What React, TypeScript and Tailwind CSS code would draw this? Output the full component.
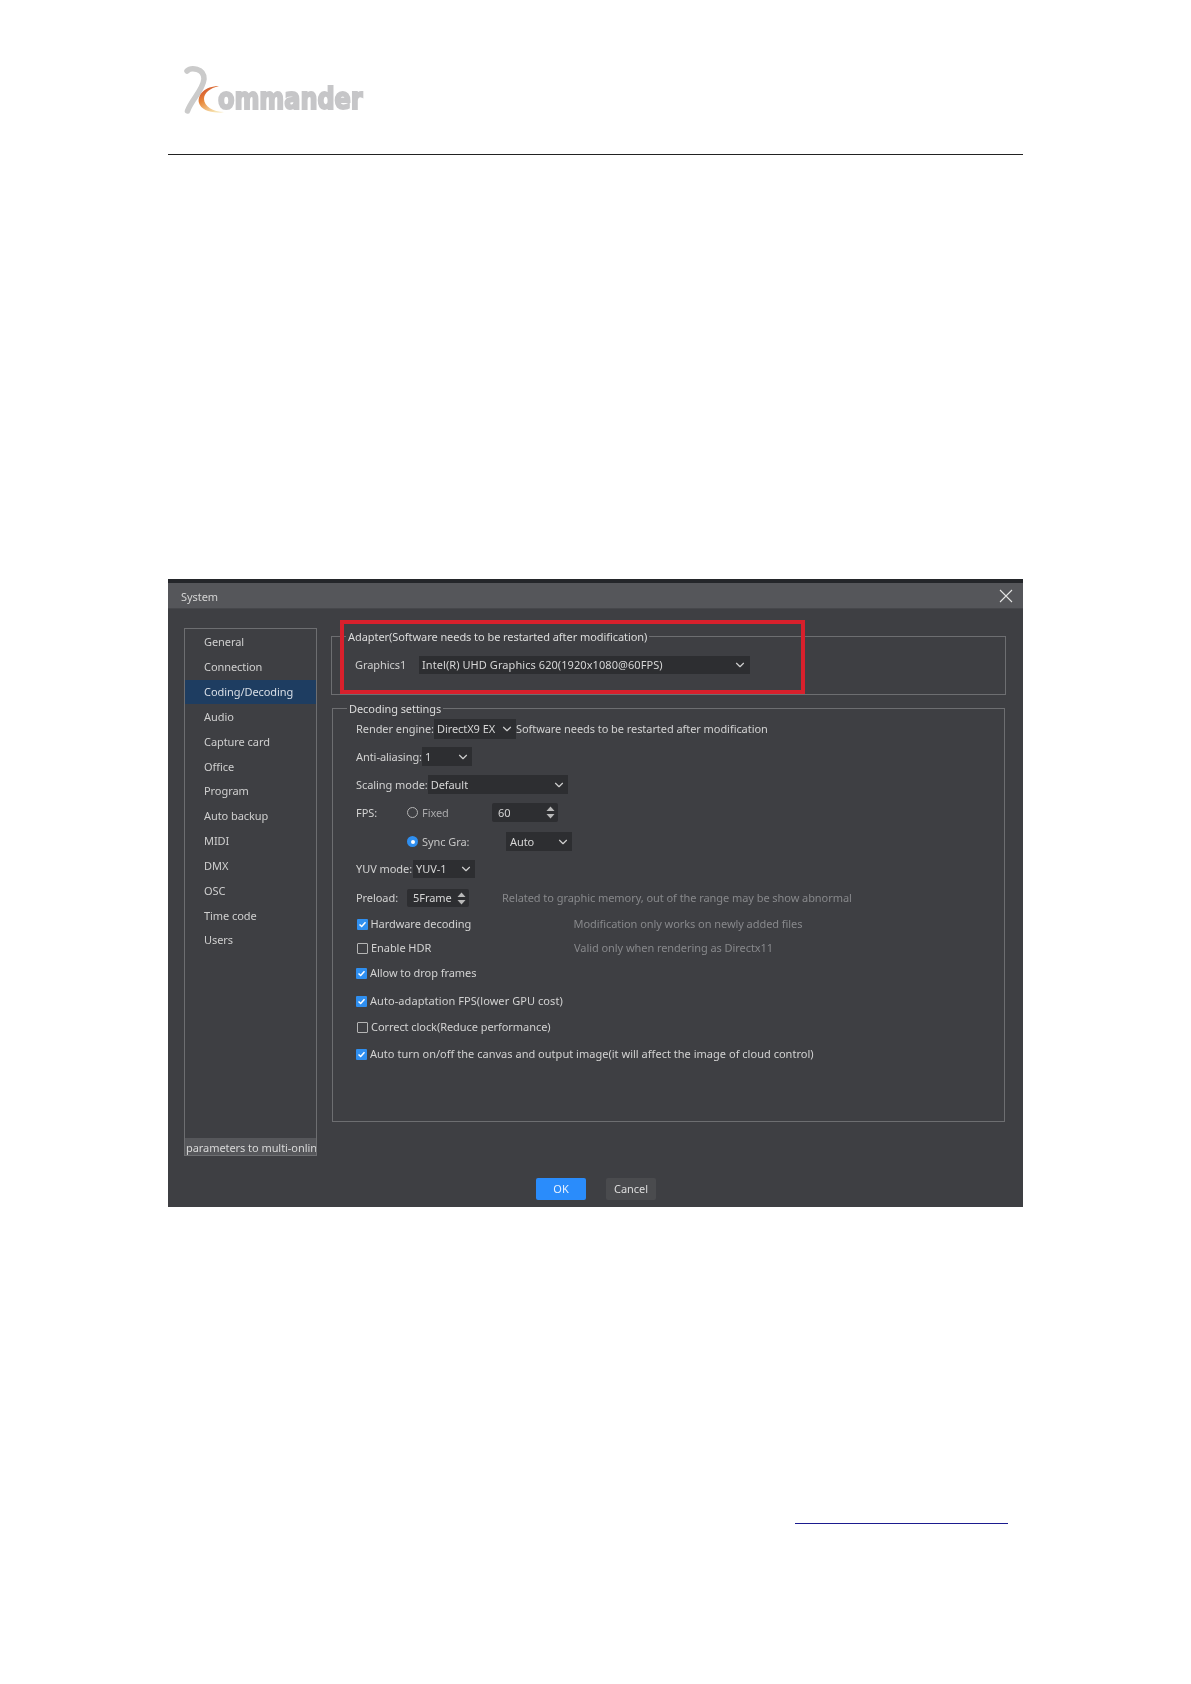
import { ChevronDown } from "lucide-react";
import type { ReactNode } from "react";

const navItems = [
  "General",
  "Connection",
  "Coding/Decoding",
  "Audio",
  "Capture card",
  "Office",
  "Program",
  "Auto backup",
  "MIDI",
  "DMX",
  "OSC",
  "Time code",
  "Users",
];

function Logo() {
  return (
    <svg width="190" height="54" viewBox="182 64 190 54" className="ml-[14px] blur-[0.4px]">
      <defs>
        <linearGradient id="crescent" x1="0" y1="0" x2="0.6" y2="1">
          <stop offset="0" stopColor="#c9402a" />
          <stop offset="0.5" stopColor="#e98a3c" />
          <stop offset="1" stopColor="#f7e3b0" />
        </linearGradient>
      </defs>
      <path d="M187 71 C191 67 204 68 204 79 C203 90 192 99 187.500 111" fill="none" stroke="#cbcbcb" strokeWidth="5.500" strokeLinecap="round" />
      <path d="M219 86 C205 86 197 95 199 103 C201 110 212 114 224 112 C213 112 204 106 204 99 C204 93 210 88 219 86 Z" fill="url(#crescent)" />
      <text transform="translate(218 109) scale(1 1.25)" fontFamily="'DejaVu Sans', sans-serif" fontWeight="700" fontSize="24" fill="#c6c6c8" stroke="#c6c6c8" strokeWidth="1.600">
        ommander
      </text>
    </svg>
  );
}

function Select({ value, className }: { value: string; className: string }) {
  return (
    <div className={`flex items-center justify-between bg-[#2d2e31] pl-[3px] pr-[2px] text-[#d6d6d6] ${className}`}>
      <span>{value}</span>
      <ChevronDown size={14} strokeWidth={2} className="text-[#cfcfcf]" />
    </div>
  );
}

function Spinner({ value, className }: { value: string; className: string }) {
  return (
    <div className={`flex items-center justify-between rounded-[2px] bg-[#2d2e31] pl-[6px] pr-[3px] text-[#d6d6d6] ${className}`}>
      <span>{value}</span>
      <svg width="9" height="13" viewBox="0 0 9 13" fill="#b9b9b9">
        <path d="M4.500 0.500 L8.500 5 H0.500 Z" />
        <path d="M0.500 8 H8.500 L4.500 12.500 Z" />
      </svg>
    </div>
  );
}

function Check({ checked }: { checked?: boolean }) {
  if (!checked) {
    return <span className="block h-[11px] w-[11px] shrink-0 rounded-[1px] border border-[#b5b5b5]" />;
  }
  return (
    <span className="flex h-[11px] w-[11px] shrink-0 items-center justify-center rounded-[1px] bg-[#2f8ff0]">
      <svg width="9" height="9" viewBox="0 0 9 9" fill="none" stroke="#ffffff" strokeWidth="1.500">
        <path d="M1.500 4.500 L3.700 6.500 L7.500 2.200" />
      </svg>
    </span>
  );
}

function CheckRow({ checked, label, hint, className }: { checked?: boolean; label: string; hint?: string; className: string }) {
  return (
    <div className={`flex h-[18px] items-center ${className}`}>
      <Check checked={checked} />
      <span className="ml-[3px] w-[203px] whitespace-nowrap">{label}</span>
      {hint ? <span className="whitespace-nowrap text-[#87888b]">{hint}</span> : null}
    </div>
  );
}

function Group({ title, className, children }: { title: string; className: string; children: ReactNode }) {
  return (
    <div className={`relative border border-[#6d6e71] ${className}`}>
      <span className="absolute left-[14px] top-[-8px] whitespace-nowrap bg-[#3e3f43] px-[2px] text-[#dcdcdc]">{title}</span>
      {children}
    </div>
  );
}

export default function App() {
  return (
    <div className="h-[1684px] overflow-hidden bg-white px-[168px] font-['Noto_Sans',sans-serif] text-[11px] leading-[16px] tracking-[-0.06px]">
      <header className="h-[155px] border-b border-[#222222] pt-[64px]">
        <Logo />
      </header>

      <section className="relative mt-[424px] h-[628px] bg-[#3e3f43] text-[#d2d2d2] blur-[0.3px]">
        <div className="h-[4px] bg-[#24262a]" />
        <div className="flex h-[26px] items-center justify-between border-b border-[#46474b] bg-[#55565a] pl-[13px] pr-[10px] pt-[2px] text-[#d4d4d4]">
          <span>System</span>
          <svg width="14" height="14" viewBox="0 0 14 14" stroke="#e4e4e4" strokeWidth="1.100" fill="none" className="mb-[2px]">
            <path d="M1 1 L13 13 M13 1 L1 13" />
          </svg>
        </div>

        <div className="flex pl-[16px] pt-[19px]">
          <aside className="flex h-[528px] w-[133px] shrink-0 flex-col border border-[#6d6e71]">
            <nav className="flex-1 pt-[1px]">
              {navItems.map((item) => (
                <div
                  key={item}
                  className={`flex h-[24.83px] items-center pl-[19px] ${item === "Coding/Decoding" ? "bg-[#1e3d61] text-[#d8dee6]" : "text-[#cfcfcf]"}`}
                >
                  {item}
                </div>
              ))}
            </nav>
            <div className="flex h-[17px] items-center overflow-hidden whitespace-nowrap bg-[#56575b] pl-[1px] pt-[2px] text-[#d8d8d8]">
              parameters to multi-online
            </div>
          </aside>

          <div className="ml-[14px] w-[675px] shrink-0 pt-[8px]">
            <Group title="Adapter(Software needs to be restarted after modification)" className="flex h-[59px] items-start pl-[23px] pt-[19px]">
              <span className="w-[64px] whitespace-nowrap leading-[18px] text-[#cfcfcf]">Graphics1</span>
              <Select value="Intel(R) UHD Graphics 620(1920x1080@60FPS)" className="h-[18px] w-[331px] pl-[3px] pr-[3px] tracking-[0.07px]" />
            </Group>

            <Group title="Decoding settings" className="ml-[1px] mt-[13px] h-[414px] w-[673px] pl-[23px] pt-[10px]">
              <div className="flex h-[20px] items-center">
                <span className="whitespace-nowrap">Render engine:</span>
                <Select value="DirectX9 EX" className="h-[20px] w-[82px]" />
                <span className="whitespace-nowrap">Software needs to be restarted after modification</span>
              </div>
              <div className="mt-[8px] flex h-[19px] items-center">
                <span className="whitespace-nowrap">Anti-aliasing:</span>
                <Select value="1" className="h-[19px] w-[50px]" />
              </div>
              <div className="mt-[9px] flex h-[19px] items-center">
                <span className="whitespace-nowrap">Scaling mode:</span>
                <Select value="Default" className="h-[19px] w-[140px]" />
              </div>
              <div className="mt-[9px] flex h-[19px] items-center">
                <span className="w-[51px]">FPS:</span>
                <span className="h-[11px] w-[11px] shrink-0 rounded-full border-[1.5px] border-[#b5b5b5]" />
                <span className="ml-[4px] w-[70px] text-[#a9a9ab]">Fixed</span>
                <Spinner value="60" className="h-[19px] w-[66px]" />
              </div>
              <div className="mt-[10px] flex h-[19px] items-center">
                <span className="w-[51px]" />
                <span className="flex h-[11px] w-[11px] shrink-0 items-center justify-center rounded-full bg-[#2f8ff0]">
                  <span className="h-[4px] w-[4px] rounded-full bg-white" />
                </span>
                <span className="ml-[4px] w-[84px] text-[#c6c6c6]">Sync Gra:</span>
                <Select value="Auto" className="h-[19px] w-[66px] pl-[4px]" />
              </div>
              <div className="mt-[9px] flex h-[18px] items-center">
                <span className="whitespace-nowrap">YUV mode:</span>
                <Select value="YUV-1" className="ml-[1px] h-[18px] w-[62px]" />
              </div>
              <div className="mt-[11px] flex h-[18px] items-center">
                <span className="w-[51px]">Preload:</span>
                <Spinner value="5Frame" className="h-[18px] w-[62px]" />
                <span className="ml-[33px] whitespace-nowrap text-[#87888b]">Related to graphic memory, out of the range may be show abnormal</span>
              </div>
              <CheckRow checked label="Hardware decoding" hint="Modification only works on newly added files" className="ml-[0.5px] mt-[8px]" />
              <CheckRow label="Enable HDR" hint="Valid only when rendering as Directx11" className="ml-[1px] mt-[6px]" />
              <CheckRow checked label="Allow to drop frames" className="mt-[7px]" />
              <CheckRow checked label="Auto-adaptation FPS(lower GPU cost)" className="mt-[10px] tracking-[0.07px]" />
              <CheckRow label="Correct clock(Reduce performance)" className="ml-[1px] mt-[8px]" />
              <CheckRow checked label="Auto turn on/off the canvas and output image(it will affect the image of cloud control)" className="mt-[9px] tracking-[0.02px]" />
            </Group>
          </div>
        </div>

        <div className="mt-[22px] flex gap-[20px] pl-[368px]">
          <button className="h-[22px] w-[50px] rounded-[2px] bg-[#2a8cfb] text-[#e8f2ff]">OK</button>
          <button className="h-[22px] w-[50px] rounded-[2px] bg-[#4a4b4e] text-[#dcdcdc]">Cancel</button>
        </div>

        {/* annotation drawn over the screenshot */}
        <div className="absolute left-[172px] top-[41px] h-[74px] w-[465px] border-[4px] border-[#d8202c]" />
      </section>

      <div className="ml-[627px] mt-[316px] h-[1px] w-[213px] bg-[#1b1b8f]" />
    </div>
  );
}
